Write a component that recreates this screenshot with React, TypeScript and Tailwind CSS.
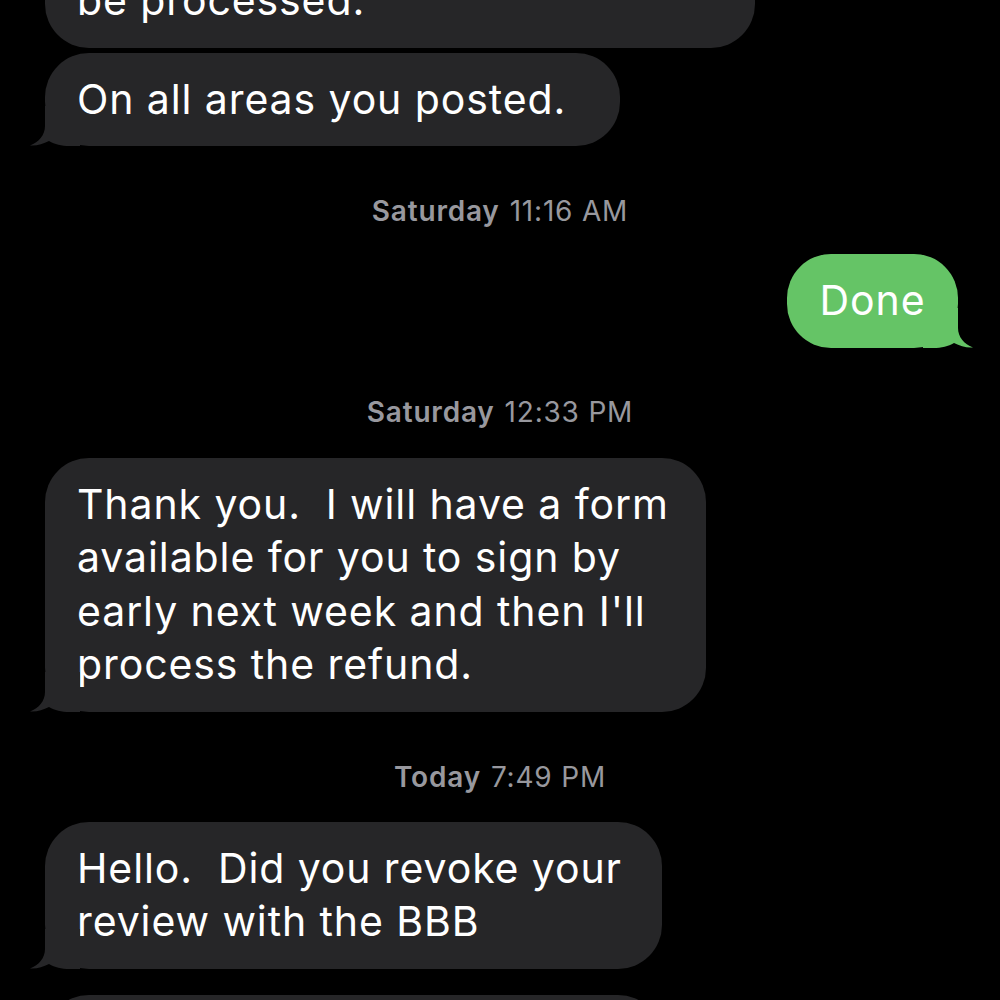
import React from 'react';

const font = { fontFamily: 'Inter, "Liberation Sans", sans-serif' };

function Tail({ side, color }: { side: 'left' | 'right'; color: string }) {
  // tail drawn at the bottom corner of the bubble, bubble edge at x=15 in svg coords
  const d =
    'M15,0 L15,20 C15,29 9,36 0,39.5 C7,40 13,38 19,35 C25,38.5 31,40 40,40 L50,40 L50,0 Z';
  return (
    <svg
      width="50"
      height="40"
      viewBox="0 0 50 40"
      className={
        side === 'left'
          ? 'absolute bottom-0 left-[-15px]'
          : 'absolute bottom-0 right-[-15px] -scale-x-100'
      }
    >
      <path d={d} fill={color} />
    </svg>
  );
}

function Incoming({
  lines,
  width,
  tail = true,
  className = '',
}: {
  lines: string[];
  width: string;
  tail?: boolean;
  className?: string;
}) {
  return (
    <div className={'relative self-start ml-[45px] ' + width + ' ' + className}>
      <div className="relative z-10 rounded-[44px] bg-[#262628] py-[20px] pl-[32px] pr-[20px] text-[41px] leading-[53.5px] text-white whitespace-pre tracking-[0.9px]">
        {lines.map((l, i) => (
          <div key={i}>{l}</div>
        ))}
      </div>
      {tail && (
        <div className="absolute inset-0 z-20 pointer-events-none">
          <Tail side="left" color="#262628" />
        </div>
      )}
    </div>
  );
}

function Stamp({ day, time, className = '' }: { day: string; time: string; className?: string }) {
  return (
    <div className={'h-[30px] flex items-center justify-center text-[28px] tracking-[0.8px] text-[#98989e] ' + className}>
      <span className="font-semibold">{day}</span>
      <span className="ml-[10px]">{time}</span>
    </div>
  );
}

export default function App() {
  return (
    <div className="w-[1000px] h-[1000px] bg-black overflow-hidden flex flex-col" style={font}>
      <Incoming lines={['be processed.']} width="w-[710px]" tail={false} className="-mt-[46px]" />
      <Incoming lines={['On all areas you posted.']} width="w-[575px]" className="mt-[5px]" />

      <Stamp day="Saturday" time="11:16 AM" className="mt-[50px]" />

      <div className="relative self-end mr-[42px] mt-[28px] w-[171px]">
        <div className="relative z-10 rounded-[44px] bg-[#65c466] py-[20px] text-center text-[41px] leading-[53.5px] tracking-[0.9px] text-white">
          Done
        </div>
        <div className="absolute inset-0 z-20 pointer-events-none">
          <Tail side="right" color="#65c466" />
        </div>
      </div>

      <Stamp day="Saturday" time="12:33 PM" className="mt-[49px]" />

      <Incoming
        lines={[
          'Thank you.  I will have a form',
          'available for you to sign by',
          "early next week and then I'll",
          'process the refund.',
        ]}
        width="w-[661px]"
        className="mt-[31px]"
      />

      <Stamp day="Today" time="7:49 PM" className="mt-[50px]" />

      <Incoming
        lines={['Hello.  Did you revoke your', 'review with the BBB']}
        width="w-[617px]"
        className="mt-[30px]"
      />

      <Incoming lines={['\u00a0']} width="w-[617px]" tail={false} className="mt-[26px]" />
    </div>
  );
}
